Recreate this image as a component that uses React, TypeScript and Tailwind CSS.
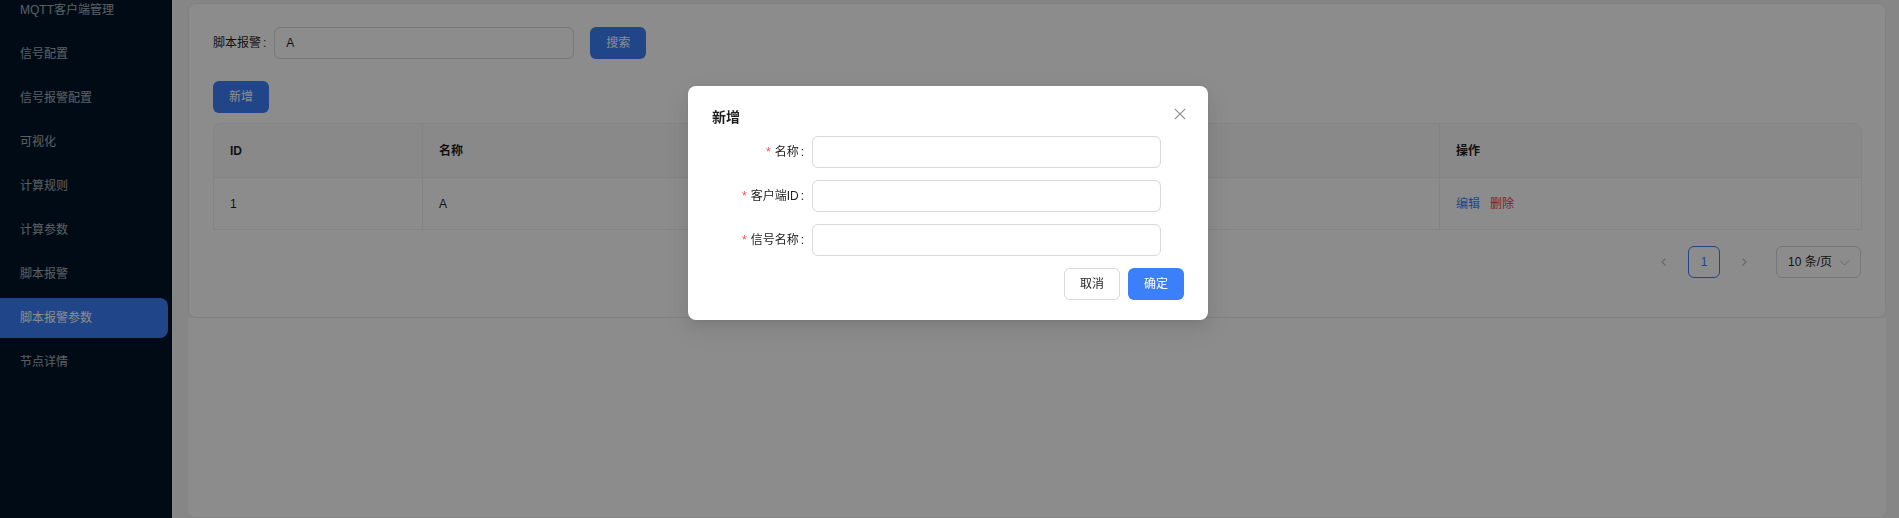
import React from "react";

const menuItems = [
  "MQTT客户端管理",
  "信号配置",
  "信号报警配置",
  "可视化",
  "计算规则",
  "计算参数",
  "脚本报警",
  "脚本报警参数",
  "节点详情",
];

const cols = "grid grid-cols-[209px_338px_340px_339px_422px]";

function ChevronLeft() {
  return (
    <svg width="10" height="10" viewBox="0 0 10 10" fill="none">
      <path d="M6.5 1.5L3 5l3.5 3.5" stroke="currentColor" strokeWidth="1.1" />
    </svg>
  );
}

function ChevronRight() {
  return (
    <svg width="10" height="10" viewBox="0 0 10 10" fill="none">
      <path d="M3.5 1.5L7 5 3.5 8.5" stroke="currentColor" strokeWidth="1.1" />
    </svg>
  );
}

function ChevronDown() {
  return (
    <svg width="11" height="11" viewBox="0 0 11 11" fill="none">
      <path d="M1 3.5l4.5 4.5L10 3.5" stroke="currentColor" strokeWidth="1" />
    </svg>
  );
}

function FormRow({ label }: { label: string }) {
  return (
    <div className="mb-3 flex h-8 items-center">
      <div className="flex w-[100px] items-center justify-end">
        <span className="mr-1 font-[family-name:SimSun,'Liberation_Sans',sans-serif] text-[#ff4d4f]">*</span>
        <span>{label}</span>
        <span className="ml-[2px] mr-[8px]">:</span>
      </div>
      <div className="h-8 w-[349px] rounded-md border border-[#d9d9d9] bg-white" />
    </div>
  );
}

export default function App() {
  return (
    <div className="relative flex h-[518px] w-full overflow-hidden bg-[#f5f5f5] font-[family-name:'Liberation_Sans','Noto_Sans_CJK_SC',sans-serif] text-[12px] leading-[20px] text-[#1f1f1f]">
      <aside className="w-[172px] shrink-0 bg-[#001529]">
        <nav className="-mt-[10px] flex flex-col gap-1">
          {menuItems.map((item) => {
            const active = item === "脚本报警参数";
            return (
              <div
                key={item}
                className={
                  active
                    ? "flex h-10 w-[168px] items-center rounded-r-lg bg-[#3b7ffa] pl-5 text-white"
                    : "flex h-10 w-[168px] items-center pl-5 text-white/65"
                }
              >
                {item}
              </div>
            );
          })}
        </nav>
      </aside>

      <main className="flex min-w-0 flex-1 flex-col pb-px pl-4 pr-[13px] pt-[3px]">
        <section className="rounded-lg border border-[#ececec] bg-white px-6 pb-[39px] pt-[23px]">
          <div className="flex h-8 items-center">
            <span>脚本报警</span>
            <span className="ml-[2px] mr-[8px]">:</span>
            <div className="flex h-8 w-[300px] items-center rounded-md border border-[#d9d9d9] px-[11px]">A</div>
            <button className="ml-4 h-8 w-14 rounded-md bg-[#3b7ffa] text-white">搜索</button>
          </div>

          <button className="mt-[22px] h-8 w-14 rounded-md bg-[#3b7ffa] text-white">新增</button>

          <div className="mt-[10px] rounded-t-lg border-l border-t border-[#f0f0f0]">
            <div className={`${cols} rounded-t-lg bg-[#fafafa] font-semibold`}>
              <div className="flex h-[54px] items-center border-b border-r border-[#f0f0f0] px-4">ID</div>
              <div className="flex h-[54px] items-center border-b border-r border-[#f0f0f0] px-4">名称</div>
              <div className="flex h-[54px] items-center border-b border-r border-[#f0f0f0] px-4" />
              <div className="flex h-[54px] items-center border-b border-r border-[#f0f0f0] px-4" />
              <div className="flex h-[54px] items-center rounded-tr-lg border-b border-r border-[#f0f0f0] px-4">操作</div>
            </div>
            <div className={cols}>
              <div className="flex h-[52px] items-center border-b border-r border-[#f0f0f0] px-4">1</div>
              <div className="flex h-[52px] items-center border-b border-r border-[#f0f0f0] px-4">A</div>
              <div className="flex h-[52px] items-center border-b border-r border-[#f0f0f0] px-4" />
              <div className="flex h-[52px] items-center border-b border-r border-[#f0f0f0] px-4" />
              <div className="flex h-[52px] items-center gap-[10px] border-b border-r border-[#f0f0f0] px-4">
                <span className="text-[#3b7ffa]">编辑</span>
                <span className="text-[#f5315a]">删除</span>
              </div>
            </div>
          </div>

          <div className="mt-4 flex h-8 items-center justify-end">
            <div className="flex h-8 w-8 items-center justify-center text-black/25">
              <ChevronLeft />
            </div>
            <div className="ml-2 flex h-8 w-8 items-center justify-center rounded-md border border-[#3b7ffa] font-medium text-[#3b7ffa]">
              1
            </div>
            <div className="ml-2 flex h-8 w-8 items-center justify-center text-black/25">
              <ChevronRight />
            </div>
            <div className="ml-4 flex h-8 w-[85px] items-center justify-between rounded-md border border-[#d9d9d9] pl-[11px] pr-[10px]">
              <span>10 条/页</span>
              <span className="text-black/25">
                <ChevronDown />
              </span>
            </div>
          </div>
        </section>
        <div className="flex-1 rounded-b-lg bg-white" />
      </main>

      <div className="fixed inset-0 bg-black/45" />

      <div className="fixed inset-0 flex items-start justify-center pr-[3px] pt-[86px]">
        <div className="relative w-[520px] rounded-lg bg-white px-6 pb-5 pt-5 shadow-[0_6px_16px_0_rgba(0,0,0,0.08),0_3px_6px_-4px_rgba(0,0,0,0.12),0_9px_28px_8px_rgba(0,0,0,0.05)]">
          <button className="absolute right-[17px] top-[17px] flex h-[22px] w-[22px] items-center justify-center text-black/45">
            <svg width="12" height="12" viewBox="0 0 12 12" fill="none">
              <path d="M0.8 0.8L11.2 11.2M11.2 0.8L0.8 11.2" stroke="currentColor" strokeWidth="1.2" />
            </svg>
          </button>
          <div className="mb-2 text-[14px] font-semibold leading-[22px]">新增</div>
          <FormRow label="名称" />
          <FormRow label="客户端ID" />
          <FormRow label="信号名称" />
          <div className="flex justify-end gap-2">
            <button className="h-8 w-14 rounded-md border border-[#d9d9d9] bg-white">取消</button>
            <button className="h-8 w-14 rounded-md bg-[#3b7ffa] text-white">确定</button>
          </div>
        </div>
      </div>
    </div>
  );
}
